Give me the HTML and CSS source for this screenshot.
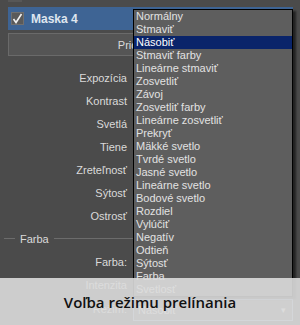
FILE: index.html
```html
<html>
    <head>
        <link rel="stylesheet" href="styles.css">
    </head>
    <body>
        <div class="panel">
            <div class="strip"><div class="prev-box"></div></div>
            <div class="header">
                <div class="check">
                    <svg width="11" height="11" viewBox="0 0 11 11"><path d="M1.5 6 L4 9.5 L9.5 1" fill="none" stroke="#f2f2f2" stroke-width="1.6"/></svg>
                </div>
                <span class="title">Maska 4</span>
            </div>
            <div class="button">Pridať masku</div>
            <div class="rows">
                <div class="row"><label>Expozícia</label><div></div></div>
                <div class="row"><label>Kontrast</label><div></div></div>
                <div class="row"><label>Svetlá</label><div></div></div>
                <div class="row"><label>Tiene</label><div></div></div>
                <div class="row"><label>Zreteľnosť</label><div></div></div>
                <div class="row"><label>Sýtosť</label><div></div></div>
                <div class="row"><label>Ostrosť</label><div></div></div>
                <div class="section"><span class="line short"></span><span>Farba</span><span class="line"></span></div>
                <div class="row"><label>Farba:</label><div></div></div>
                <div class="row"><label>Intenzita</label><div></div></div>
                <div class="row"><label>Režim:</label><div class="select">Násobiť<span class="arrow">&#9662;</span></div></div>
            </div>
        </div>
        <ul class="list">
            <li>Normálny</li>
            <li>Stmaviť</li>
            <li class="selected">Násobiť</li>
            <li>Stmaviť farby</li>
            <li>Lineárne stmaviť</li>
            <li>Zosvetliť</li>
            <li>Závoj</li>
            <li>Zosvetliť farby</li>
            <li>Lineárne zosvetliť</li>
            <li>Prekryť</li>
            <li>Mäkké svetlo</li>
            <li>Tvrdé svetlo</li>
            <li>Jasné svetlo</li>
            <li>Lineárne svetlo</li>
            <li>Bodové svetlo</li>
            <li>Rozdiel</li>
            <li>Vylúčiť</li>
            <li>Negatív</li>
            <li>Odtieň</li>
            <li>Sýtosť</li>
            <li>Farba</li>
            <li>Svetlosť</li>
        </ul>
        <div class="caption">Voľba režimu prelínania</div>
    </body>
</html>
```
FILE: styles.css
```css
body {
    margin: 0;
    width: 300px;
    height: 325px;
    overflow: hidden;
    background: #4b4b4b;
    font-family: "Liberation Sans", Arial, sans-serif;
    font-size: 11px;
    color: #dadada;
    position: relative;
}
.panel {
    padding: 0 7px 0 8px;
}
.strip {
    height: 7px;
}
.prev-box {
    width: 14px;
    height: 2px;
    background: #575757;
}
.header {
    height: 23px;
    background: #3e6494;
    display: flex;
    align-items: center;
}
.check {
    width: 13px;
    height: 13px;
    margin-left: 3px;
    background: #5a5a5a;
    border: 1px solid #707070;
    box-sizing: border-box;
    display: flex;
    align-items: center;
    justify-content: center;
}
.title {
    margin-left: 7px;
    font-weight: bold;
    font-size: 12px;
    color: #dfe6ef;
}
.button {
    margin-top: 3px;
    height: 23px;
    box-sizing: border-box;
    border: 1px solid #6a6a6a;
    background: #555555;
    display: flex;
    align-items: center;
    justify-content: center;
}
.rows {
    margin-top: 10px;
}
.row {
    height: 23px;
    display: grid;
    grid-template-columns: 119px 1fr;
    column-gap: 6px;
    align-items: center;
}
.row label {
    text-align: right;
}
.section {
    height: 23px;
    display: flex;
    align-items: center;
    gap: 5px;
    margin-left: -4px;
}
.line {
    flex: 1;
    height: 1px;
    background: #6c6c6c;
}
.line.short {
    flex: 0 0 11px;
}
.select {
    height: 22px;
    margin-top: 3px;
    box-sizing: border-box;
    border: 1px solid #8fa4c2;
    background: #5a5a5a;
    padding-left: 4px;
    display: flex;
    align-items: center;
    justify-content: space-between;
    color: #e4e4e4;
}
.arrow {
    font-size: 9px;
    margin-right: 6px;
    color: #e0e0e0;
}
.list {
    position: absolute;
    left: 133px;
    top: 9px;
    width: 160px;
    margin: 0;
    padding: 0;
    list-style: none;
    background: #5e5e5e;
    border: 1px solid #000;
    box-sizing: border-box;
    box-shadow: 3px 2px 2px rgba(0, 0, 0, 0.55);
}
.list li {
    height: 13px;
    line-height: 13px;
    padding-left: 2px;
    color: #e2e2e2;
    white-space: nowrap;
}
.list li.selected {
    background: #0a246a;
    color: #ffffff;
}
.caption {
    position: absolute;
    left: 0;
    right: 0;
    bottom: 0;
    height: 47px;
    background: rgba(220, 220, 220, 0.9);
    display: flex;
    align-items: center;
    justify-content: center;
    font-family: "Open Sans", sans-serif;
    font-weight: 600;
    font-size: 15px;
    color: #111;
}
```
